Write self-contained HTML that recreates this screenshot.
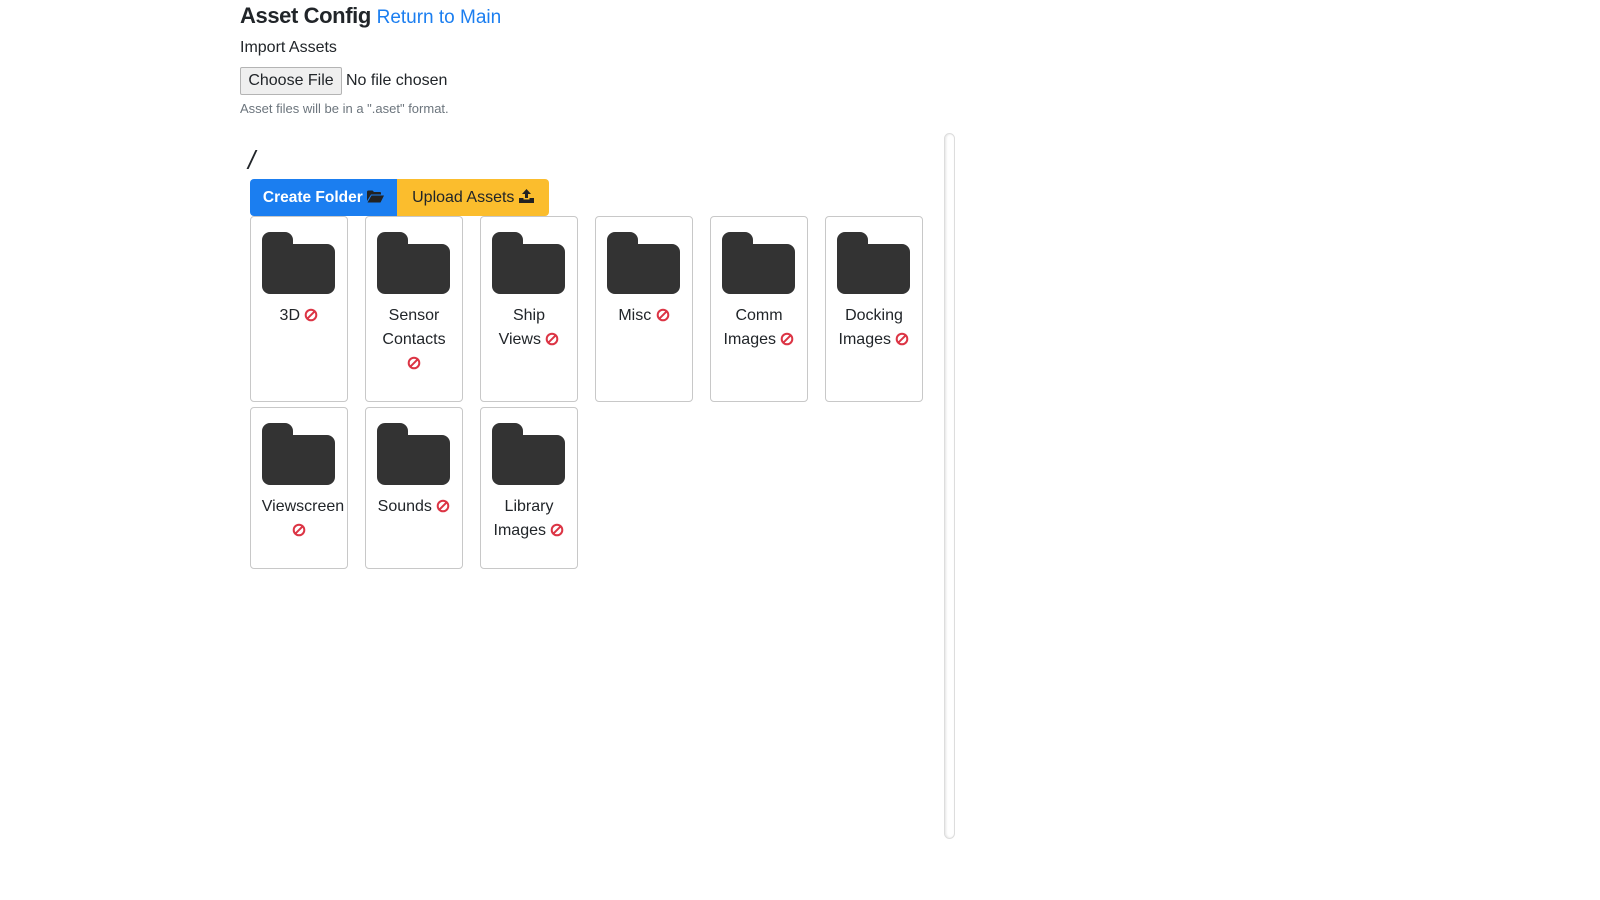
<!DOCTYPE html>
<html><head><meta charset="utf-8"><style>
body{margin:0;background:#fff;font-family:"Liberation Sans",sans-serif;color:#212529;width:1600px;height:900px;position:relative;overflow:hidden}
.a{position:absolute;white-space:nowrap}
.card{position:absolute;width:96px;border:1px solid #c8c8c8;border-radius:4px;text-align:center;font-size:16px;line-height:24px;box-sizing:content-box}
.card svg.f{display:block;margin:15px auto 0 11px}
.card .t{margin-top:10px;padding:0 9px}
.no{display:inline-block;vertical-align:-2px}
.btn{position:absolute;top:179px;height:37px;line-height:37px;font-size:16px;padding:0;text-align:center;white-space:nowrap;box-sizing:border-box}
</style></head><body>
<div class="a" style="left:240px;top:2px;font-size:22px;line-height:28px;font-weight:bold;letter-spacing:-0.4px">Asset Config <span style="color:#1b7ef0;font-size:19px;letter-spacing:0;font-weight:normal">Return to Main</span></div>
<div class="a" style="left:240px;top:38px;font-size:16px;line-height:20px">Import Assets</div>
<div class="a" style="left:240px;top:67px;width:100px;height:26px;border:1px solid #b4b4b4;background:#efefef;border-radius:2px;font-size:16px;line-height:26px;text-align:center">Choose File</div>
<div class="a" style="left:346px;top:71px;font-size:16px;line-height:20px">No file chosen</div>
<div class="a" style="left:240px;top:101px;font-size:13px;color:#6c757d;line-height:16px">Asset files will be in a ".aset" format.</div>
<div class="a" style="left:248px;top:145px;font-size:26px;font-style:italic;line-height:30px">/</div>
<div class="btn" style="left:250px;width:147px;background:#1b7ef0;color:#fff;font-weight:bold;border-radius:4px 0 0 4px;font-size:15.5px">Create Folder <svg width="17" height="13" viewBox="0 0 17 13" style="vertical-align:-1px"><path d="M0 2a1.5 1.5 0 0 1 1.5-1.5h4l1.5 1.5h6a1 1 0 0 1 1 1v1.5H4L0 11z M4.5 5.5H17l-3.5 7H0.5z" fill="#222"/></svg></div>
<div class="btn" style="left:397px;width:152px;background:#fbbd2d;color:#212529;border-radius:0 4px 4px 0">Upload Assets <svg width="15" height="14" viewBox="0 0 15 14" style="vertical-align:-1px"><path d="M7.5 0L12 5H9v4H6V5H3z M0 9h4.5v1.5h6V9H15v5H0z" fill="#222"/></svg></div>

<div class="a" style="left:944px;top:133px;width:9px;height:704px;border:1px solid #ddd;border-radius:6px;box-shadow:inset 1px 0 2px #e4e4e4"></div>

<svg width="0" height="0" style="position:absolute"><defs>
<symbol id="fold" viewBox="0 0 73 62"><path d="M8 0h15a8 8 0 0 1 8 8v4h34a8 8 0 0 1 8 8v34a8 8 0 0 1-8 8H8a8 8 0 0 1-8-8V8a8 8 0 0 1 8-8z" fill="#333"/></symbol>
<symbol id="ban" viewBox="0 0 14 14"><circle cx="7" cy="7" r="5.3" fill="none" stroke="#dc3545" stroke-width="2"/><line x1="3.3" y1="10.7" x2="10.7" y2="3.3" stroke="#dc3545" stroke-width="2"/></symbol>
</defs></svg>

<div class="card" style="left:250px;top:216px;height:184px"><svg class="f" width="73" height="62"><use href="#fold"/></svg><div class="t">3D <svg class="no" width="14" height="14"><use href="#ban"/></svg></div></div>
<div class="card" style="left:365px;top:216px;height:184px"><svg class="f" width="73" height="62"><use href="#fold"/></svg><div class="t">Sensor Contacts <svg class="no" width="14" height="14"><use href="#ban"/></svg></div></div>
<div class="card" style="left:480px;top:216px;height:184px"><svg class="f" width="73" height="62"><use href="#fold"/></svg><div class="t">Ship<br>Views <svg class="no" width="14" height="14"><use href="#ban"/></svg></div></div>
<div class="card" style="left:595px;top:216px;height:184px"><svg class="f" width="73" height="62"><use href="#fold"/></svg><div class="t">Misc <svg class="no" width="14" height="14"><use href="#ban"/></svg></div></div>
<div class="card" style="left:710px;top:216px;height:184px"><svg class="f" width="73" height="62"><use href="#fold"/></svg><div class="t">Comm<br>Images <svg class="no" width="14" height="14"><use href="#ban"/></svg></div></div>
<div class="card" style="left:825px;top:216px;height:184px"><svg class="f" width="73" height="62"><use href="#fold"/></svg><div class="t">Docking<br>Images <svg class="no" width="14" height="14"><use href="#ban"/></svg></div></div>
<div class="card" style="left:250px;top:407px;height:160px"><svg class="f" width="73" height="62"><use href="#fold"/></svg><div class="t" style="padding:0 0 0 8px">Viewscreen<br><svg class="no" width="14" height="14" style="margin-left:-8px"><use href="#ban"/></svg></div></div>
<div class="card" style="left:365px;top:407px;height:160px"><svg class="f" width="73" height="62"><use href="#fold"/></svg><div class="t" style="padding:0">Sounds <svg class="no" width="14" height="14"><use href="#ban"/></svg></div></div>
<div class="card" style="left:480px;top:407px;height:160px"><svg class="f" width="73" height="62"><use href="#fold"/></svg><div class="t">Library<br>Images <svg class="no" width="14" height="14"><use href="#ban"/></svg></div></div>
</body></html>
